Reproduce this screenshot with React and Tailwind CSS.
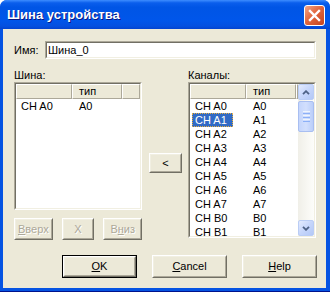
const rightRows = ['A0', 'A1', 'A2', 'A3', 'A4', 'A5', 'A6', 'A7', 'B0', 'B1'];

function Btn({ className = '', children, def, disabled }) {
  const face = (
    <div className="flex h-full w-full border border-t-white border-l-white border-r-[#716F64] border-b-[#716F64]">
      <div
        className={`flex flex-1 items-center justify-center border border-t-[#F1EFE2] border-l-[#F1EFE2] border-r-[#ACA899] border-b-[#ACA899] bg-[#ECE9D8] text-[11px] ${
          disabled ? 'text-[#ACA899] [text-shadow:1px_1px_0_#fff]' : 'text-black'
        }`}>
        {children}
      </div>
    </div>
  );
  if (def) return <div className={`border border-black ${className}`}>{face}</div>;
  return <div className={className}>{face}</div>;
}

function Sunken({ className = '', children }) {
  return (
    <div className={`border border-t-[#ACA899] border-l-[#ACA899] border-r-white border-b-white ${className}`}>
      <div className="flex h-full w-full border border-t-[#716F64] border-l-[#716F64] border-r-[#F1EFE2] border-b-[#F1EFE2] bg-white">
        {children}
      </div>
    </div>
  );
}

function Chevron({ up }) {
  return (
    <svg viewBox="0 0 8 5" className="h-[5px] w-[8px]">
      <path d={up ? 'M1 4.2L4 1.2L7 4.2' : 'M1 0.8L4 3.8L7 0.8'} fill="none" stroke="#4D6185" strokeWidth="1.8" />
    </svg>
  );
}

function ScrollBtn({ up }) {
  return (
    <div className="flex h-[16px] w-[16px] items-center justify-center rounded-[2px] border border-[#BACDF5] bg-[linear-gradient(135deg,#E3EBFE_0%,#C6D6FB_50%,#B3C8F7_100%)]">
      <Chevron up={up} />
    </div>
  );
}

function ScrollBar() {
  return (
    <div className="flex h-full w-[16px] flex-col bg-[linear-gradient(90deg,#F0EFE8_0%,#FDFDFA_100%)]">
      <ScrollBtn up />
      <div className="mt-[1px] flex h-[31px] w-[16px] flex-col items-center justify-center gap-[1px] rounded-[2px] border border-[#A8BEF1] bg-[linear-gradient(90deg,#C4D5FC_0%,#D2DFFD_50%,#BACEFA_100%)]">
        <div className="h-[1px] w-[7px] bg-[#EEF4FE]" />
        <div className="h-[1px] w-[7px] bg-[#8CB0F8]" />
        <div className="h-[1px] w-[7px] bg-[#EEF4FE]" />
        <div className="h-[1px] w-[7px] bg-[#8CB0F8]" />
        <div className="h-[1px] w-[7px] bg-[#EEF4FE]" />
        <div className="h-[1px] w-[7px] bg-[#8CB0F8]" />
      </div>
      <div className="flex-1" />
      <ScrollBtn />
    </div>
  );
}

function Header() {
  return (
    <div className="flex h-[15px] text-[11px] leading-[13px]">
      <div className="w-[56px] border border-t-white border-l-white border-r-[#ACA899] border-b-[#ACA899] bg-[#ECE9D8]" />
      <div className="w-[50px] border border-t-white border-l-white border-r-[#ACA899] border-b-[#ACA899] bg-[#ECE9D8] pl-[6px]">
        тип
      </div>
      <div className="flex-1 border border-t-white border-l-white border-r-[#ACA899] border-b-[#ACA899] bg-[#ECE9D8]" />
    </div>
  );
}

function Row({ name, type, selected }) {
  return (
    <div className="flex h-[14px] items-center text-[11px] leading-[14px]">
      <div className="w-[56px] pl-[2px]">
        {selected ? (
          <span className="inline-block h-[14px] w-[41px] border border-dotted border-[#E8B040] bg-[#316AC5] pl-[2px] leading-[12px] text-white">
            {name}
          </span>
        ) : (
          <span className="pl-[3px]">{name}</span>
        )}
      </div>
      <div className="w-[50px] pl-[7px]">{type}</div>
    </div>
  );
}

export default function App() {
  return (
    <div className="flex h-[292px] w-[330px] flex-col rounded-t-[7px] border-b border-[#00138C] bg-[#0553E2] font-['Liberation_Sans',Arial,sans-serif] text-black">
      <div className="flex h-[29px] items-start justify-between rounded-t-[7px] bg-[linear-gradient(180deg,#3D8DFF_0%,#0A5EEC_10%,#0055E5_25%,#0056EA_70%,#0450E0_90%,#0343D0_100%)] pl-[7px] pr-[5px]">
        <span className="mt-[6px] text-[13px] font-bold leading-[17px] text-white [text-shadow:1px_1px_0_#0A1883]">
          Шина устройства
        </span>
        <div className="mt-[5px] flex h-[21px] w-[21px] items-center justify-center rounded-[3px] border border-white bg-[linear-gradient(135deg,#F2A587_0%,#E2673F_45%,#C5431D_100%)]">
          <svg viewBox="0 0 13 13" className="h-[13px] w-[13px]">
            <path d="M2 2L11 11M11 2L2 11" stroke="#fff" strokeWidth="2.4" strokeLinecap="square" />
          </svg>
        </div>
      </div>

      <div className="mb-[3px] ml-[3px] mr-[4px] flex-1 bg-[#ECE9D8] pl-[11px] pt-[12px] text-[11px]">
        <div className="flex items-center">
          <span className="w-[31px]">Имя:</span>
          <Sunken className="h-[18px] w-[271px]">
            <span className="pl-[1px] leading-[14px]">Шина_0</span>
          </Sunken>
        </div>

        <div className="mt-[10px] flex items-start">
          <div className="w-[128px]">
            <div className="h-[13px] leading-[13px]">Шина:</div>
            <Sunken className="h-[128px] w-[128px]">
              <div className="flex-1">
                <Header />
                <Row name="CH A0" type="A0" />
              </div>
            </Sunken>
            <div className="mt-[8px] flex h-[22px] gap-[9px]">
              <Btn className="w-[39px]" disabled>
                <span className="underline">В</span>верх
              </Btn>
              <Btn className="w-[33px]" disabled>
                X
              </Btn>
              <Btn className="w-[39px]" disabled>
                В<span className="underline">н</span>из
              </Btn>
            </div>
          </div>

          <Btn className="ml-[7px] mt-[84px] h-[20px] w-[33px]">&lt;</Btn>

          <div className="ml-[6px] w-[128px]">
            <div className="h-[13px] leading-[13px]">Каналы:</div>
            <Sunken className="h-[156px] w-[128px]">
              <div className="flex-1 overflow-hidden">
                <Header />
                {rightRows.map((r) => (
                  <Row key={r} name={`CH ${r}`} type={r} selected={r === 'A1'} />
                ))}
              </div>
              <ScrollBar />
            </Sunken>
          </div>
        </div>

        <div className="ml-[48px] mt-[15px] flex gap-[15px]">
          <Btn className="h-[23px] w-[75px]" def>
            <span className="underline">O</span>K
          </Btn>
          <Btn className="h-[23px] w-[75px]">
            <span className="underline">C</span>ancel
          </Btn>
          <Btn className="h-[23px] w-[75px]">
            <span className="underline">H</span>elp
          </Btn>
        </div>
      </div>
    </div>
  );
}
